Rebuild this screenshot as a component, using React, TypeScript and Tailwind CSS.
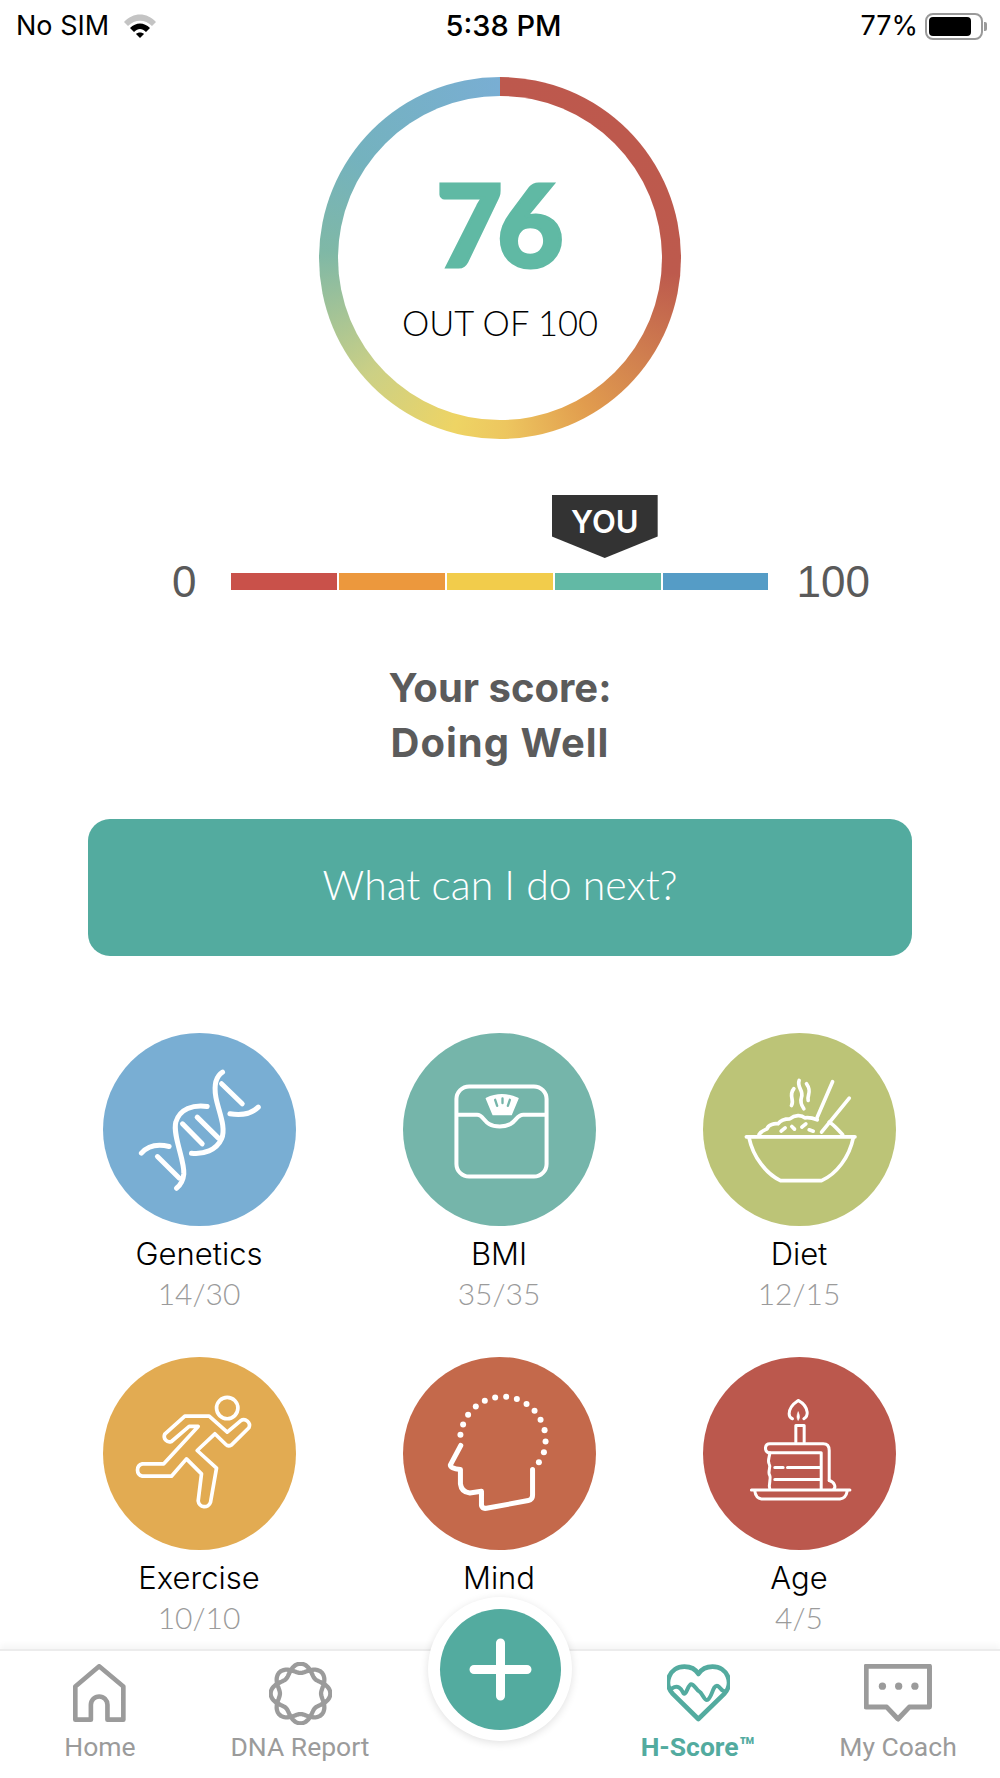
import React from 'react';

// closed wavy ring used by the DNA Report tab icon
const wavyRing = (sign: number) => {
  const points: string[] = [];
  for (let i = 0; i < 180; i++) {
    const t = (i / 180) * Math.PI * 2;
    const r = 76 + sign * 14 * Math.cos(4 * t);
    points.push(`${(900 + r * Math.sin(t)).toFixed(1)} ${(310 - r * Math.cos(t)).toFixed(1)}`);
  }
  return `M${points.join('L')}Z`;
};

const GeneticsIcon = () => (
  <svg viewBox="40 38 578 578" className="h-full w-full" fill="none" stroke="#fff" strokeWidth="15" strokeLinecap="round">
    <path d="M398 155C375 170 372 195 378 230C385 270 410 320 395 355C380 390 340 402 305 398" />
    <path d="M352 258C310 252 270 265 258 305C248 345 285 420 282 460C280 480 270 495 260 503" />
    <path d="M505 260C480 285 450 285 420 280M155 398C175 375 205 370 238 378" />
    <path d="M395 190L457 250M278 310L337 370M322 290L385 352M203 408L268 472" />
  </svg>
);

const BmiIcon = () => (
  <svg viewBox="40 38 578 578" className="h-full w-full" fill="none" stroke="#fff" strokeWidth="12" strokeLinecap="round">
    <rect x="200" y="198" width="270" height="270" rx="38" />
    <path d="M205 283H262C285 283 280 318 330 318C380 318 375 283 400 283H465" />
    <path d="M290 234C320 220 352 220 384 234L364 282H310Z" fill="#fff" strokeWidth="5" strokeLinejoin="round" />
    <path d="M316 238L322 256M338 234V248M360 238L354 256" stroke="#75b5aa" strokeWidth="7" />
  </svg>
);

const DietIcon = () => (
  <svg viewBox="40 38 578 578" className="h-full w-full" fill="none" stroke="#fff" strokeWidth="11" strokeLinecap="round" strokeLinejoin="round">
    <path d="M170 349H495" />
    <path d="M178 352C190 410 230 460 272 480H395C440 460 478 410 490 352" />
    <path d="M208 342C215 330 228 328 232 325C235 312 255 308 265 310C275 295 295 295 300 295C315 283 335 283 345 292C360 290 372 294 382 298M418 305C432 312 445 330 458 342" />
    <path d="M382 290L428 184M395 335L478 233" />
    <path d="M328 180C320 200 342 210 335 230C330 245 335 255 342 265M312 205C295 225 315 240 305 255M350 190C368 215 350 225 355 240" />
    <path d="M274 332L286 322M306 318L314 326M336 320L348 310M358 328L370 332" />
  </svg>
);

const ExerciseIcon = () => (
  <svg viewBox="40 35 578 578" className="h-full w-full" fill="none" stroke="#fff" strokeWidth="11" strokeLinejoin="round">
    <circle cx="412" cy="188" r="32" />
    <path d="M285 212H358L412 260L452 226A17 17 0 0 1 477 247L425 298Q415 304 408 297L375 265L322 315L380 368L362 470A19 19 0 0 1 325 466L335 385L290 340L245 392H158A19 19 0 0 1 158 355H222L325 243H298L245 288A16 16 0 0 1 225 266Z" />
  </svg>
);

const mindDots = [
  [212, 268], [220, 237], [235, 208], [258, 183], [285, 166], [316, 156], [349, 154], [381, 161],
  [410, 176], [434, 196], [452, 223], [464, 254], [467, 288], [462, 320], [447, 350],
];

const MindIcon = () => (
  <svg viewBox="40 35 578 578" className="h-full w-full" fill="none" stroke="#fff" strokeWidth="15" strokeLinecap="round" strokeLinejoin="round">
    <path d="M213 300L182 358Q180 368 212 372V415Q215 440 240 442L275 437V480Q278 490 290 488L415 465Q428 462 428 450V372" />
    {mindDots.map(([cx, cy]) => (
      <circle key={`${cx}-${cy}`} cx={cx} cy={cy} r="9" fill="#fff" stroke="none" />
    ))}
  </svg>
);

const AgeIcon = () => (
  <svg viewBox="40 35 578 578" className="h-full w-full" fill="none" stroke="#fff" strokeWidth="9" strokeLinecap="round" strokeLinejoin="round">
    <path d="M308 220C302 218 298 212 298 205C298 190 310 175 325 165C338 172 350 185 352 200C353 210 350 215 342 220" />
    <path d="M325 200Q318 215 325 225Q333 215 325 200Z" fill="#fff" strokeWidth="2" />
    <path d="M318 290V240H343V290" />
    <path d="M240 295H400Q418 295 418 315V405M240 295C225 295 222 315 236 322H394V430" />
    <path d="M240 322C240 335 232 345 238 355C245 365 232 378 240 390C245 400 235 415 240 430" />
    <path d="M255 366H280M293 366H392M255 402H392" />
    <path d="M418 405C435 410 438 425 432 430" />
    <path d="M185 433H480M195 436Q198 458 215 460H450Q468 458 472 436" />
  </svg>
);

const categories = [
  { name: 'Genetics', score: '14/30', color: 'bg-[#79aed3]', icon: <GeneticsIcon /> },
  { name: 'BMI', score: '35/35', color: 'bg-[#75b5aa]', icon: <BmiIcon /> },
  { name: 'Diet', score: '12/15', color: 'bg-[#bcc477]', icon: <DietIcon /> },
  { name: 'Exercise', score: '10/10', color: 'bg-[#e2ab52]', icon: <ExerciseIcon /> },
  { name: 'Mind', score: '', color: 'bg-[#c4694b]', icon: <MindIcon /> },
  { name: 'Age', score: '4/5', color: 'bg-[#bb584d]', icon: <AgeIcon /> },
];

const StatusBar = () => (
  <div className="flex h-[56px] items-center justify-between pb-[4px] pl-[16px] pr-[13px] font-['Inter',sans-serif] text-[27px] text-black">
    <div className="flex w-[300px] items-center gap-[15px]">
      <span>No SIM</span>
      <svg viewBox="0 0 32 24" className="h-[24px] w-[32px]">
        <path d="M0 8C9-2 23-2 32 8L28 12C21 5 11 5 4 12Z" fill="#c4c4c4" />
        <path d="M6 14C12 8 20 8 26 14L22 18C18 14 14 14 10 18Z" fill="#000" />
        <path d="M12 20C14 18 18 18 20 20L16 24Z" fill="#000" />
      </svg>
    </div>
    <span className="ml-[4px] text-[29px] font-medium">5:38 PM</span>
    <div className="flex w-[300px] items-center justify-end gap-[7px]">
      <span>77%</span>
      <div className="flex items-center gap-[1px]">
        <div className="h-[27px] w-[58px] rounded-[8px] border-2 border-[#9a9a9a] p-[2px]">
          <div className="h-full w-[42px] rounded-[4px] bg-black" />
        </div>
        <div className="h-[9px] w-[3px] rounded-r-[2px] bg-[#9a9a9a]" />
      </div>
    </div>
  </div>
);

const ScoreRing = () => (
  <div className="mx-auto mt-[21px] h-[362px] w-[362px] rounded-full bg-[conic-gradient(#bd584d_0deg,#bd5a4d_95deg,#d07f4f_125deg,#e19c4e_150deg,#edc65f_178deg,#eed464_195deg,#ccd085_228deg,#7fb8a6_272deg,#74b2be_305deg,#79aed3_360deg)] p-[19px]">
    <div className="flex h-full w-full flex-col items-center rounded-full bg-white">
      <div className="mr-[6px] mt-[67px] font-['Lato',sans-serif] text-[115px] font-black leading-[118px] tracking-[-0.05em] text-[#60b9a4] [-webkit-text-stroke:3px_#60b9a4]">76</div>
      <div className="mt-[20px] font-['Lato',sans-serif] text-[34.5px] font-light leading-[44px] text-black">OUT OF 100</div>
    </div>
  </div>
);

const ScaleBar = () => (
  <div className="ml-[172px] mt-[56px] flex w-[699px] items-end font-['Liberation_Sans',sans-serif] text-[44px] leading-[50px] text-[#5a5a5a]">
    <span className="-mb-[17px]">0</span>
    <div className="ml-[35px] mr-[28px] grid w-[537px] grid-cols-5 gap-x-[2px] gap-y-[15px]">
      <div className="col-start-4 -ml-[3px] mr-[3px] flex h-[63px] items-start justify-center bg-[#333333] pt-[9px] font-['Inter',sans-serif] text-[31px] font-semibold leading-[36px] text-white [clip-path:polygon(0_0,100%_0,100%_66%,50%_100%,0_66%)]">
        YOU
      </div>
      <div className="col-start-1 h-[17px] bg-[#c9514a]" />
      <div className="h-[17px] bg-[#ec983d]" />
      <div className="h-[17px] bg-[#f2cc4b]" />
      <div className="h-[17px] bg-[#62b9a5]" />
      <div className="h-[17px] bg-[#559cc6]" />
    </div>
    <span className="-mb-[17px]">100</span>
  </div>
);

const CategoryGrid = () => (
  <div className="mt-[77px] grid grid-cols-3 gap-y-[44px] pl-[49px] pr-[51px]">
    {categories.map((c) => (
      <div key={c.name} className="flex flex-col items-center">
        <div className={`h-[193px] w-[193px] rounded-full ${c.color}`}>{c.icon}</div>
        <div className="mt-[8px] font-['Inter',sans-serif] text-[31px] font-light leading-[39px] text-black">{c.name}</div>
        <div className="font-['Lato',sans-serif] text-[30px] font-light leading-[40px] text-[#9b9b9b]">{c.score}</div>
      </div>
    ))}
  </div>
);

const NavItem = ({ label, active, children }: { label: string; active?: boolean; children: React.ReactNode }) => (
  <div className="flex w-[200px] flex-col items-center">
    <div className="flex h-[62px] items-center justify-center">{children}</div>
    <span className={`mt-[7px] font-['Roboto',sans-serif] text-[26.5px] leading-[32px] ${active ? 'font-bold text-[#53ab9f]' : 'text-[#9b9b9b]'}`}>{label}</span>
  </div>
);

const BottomNav = () => (
  <div className="relative h-[129px] border-t-2 border-[#ececec] bg-white pt-[11px] shadow-[0_-4px_6px_rgba(0,0,0,0.04)]">
    <div className="flex">
      <NavItem label="Home">
        <svg viewBox="218 222 160 175" className="h-[58px] w-[53px] -translate-x-px" fill="none" stroke="#9b9b9b" strokeWidth="14" strokeLinejoin="round">
          <path d="M225 390V290L297 229L370 290V390H322V345A25 25 0 0 0 272 345V390Z" />
        </svg>
      </NavItem>
      <NavItem label="DNA Report">
        <svg viewBox="805 215 190 190" className="h-[63px] w-[63px]" fill="none" stroke="#9b9b9b" strokeWidth="13">
          <path d={wavyRing(1)} />
          <path d={wavyRing(-1)} />
        </svg>
      </NavItem>
      <div className="w-[198px]" />
      <NavItem label="H-Score™" active>
        <svg viewBox="503 222 189 175" className="h-[58px] w-[63px]" fill="none" stroke="#53ab9f" strokeWidth="14" strokeLinejoin="round" strokeLinecap="round">
          <path d="M597 388L520 312C490 280 510 230 555 230C575 230 590 240 597 252C605 240 620 230 640 230C685 230 705 280 675 312Z" />
          <path d="M518 295C535 285 545 295 552 310C560 320 565 285 575 283C585 283 590 300 600 305C610 310 615 335 625 330C640 320 640 285 655 288C665 292 665 305 680 305" strokeWidth="12" />
        </svg>
      </NavItem>
      <NavItem label="My Coach">
        <svg viewBox="1096 222 204 175" className="h-[58px] w-[68px]" fill="none" stroke="#9b9b9b" strokeWidth="15" strokeLinejoin="round">
          <path d="M1102 229H1293V352H1232L1198 388L1164 352H1102Z" />
          <circle cx="1151" cy="289" r="11" fill="#9b9b9b" stroke="none" />
          <circle cx="1200" cy="289" r="11" fill="#9b9b9b" stroke="none" />
          <circle cx="1249" cy="289" r="11" fill="#9b9b9b" stroke="none" />
        </svg>
      </NavItem>
    </div>
    {/* floating add button */}
    <div className="absolute left-[428px] top-[-54px] flex h-[144px] w-[144px] items-center justify-center rounded-full bg-white shadow-[0_2px_8px_rgba(0,0,0,0.12)]">
      <div className="flex h-[121px] w-[121px] items-center justify-center rounded-full bg-[#53ab9f]">
        <svg viewBox="0 0 63 63" className="h-[63px] w-[63px]" stroke="#fff" strokeWidth="9" strokeLinecap="round">
          <path d="M5 31.5H58M31.5 5V58" />
        </svg>
      </div>
    </div>
  </div>
);

const App: React.FC = () => {
  return (
    <div className="flex h-[1778px] w-[1000px] flex-col overflow-hidden bg-white">
      <StatusBar />
      <div className="flex-1">
        <ScoreRing />
        <ScaleBar />
        <div className="mt-[70px] text-center font-['Inter',sans-serif] text-[40px] font-bold leading-[55px] text-[#5b5b5b]">
          <div>Your score:</div>
          <div className="tracking-[1px]">Doing Well</div>
        </div>
        <div className="mx-[88px] mt-[49px] flex h-[137px] items-center justify-center rounded-[22px] bg-[#53ab9f] pb-[5px] font-['Lato',sans-serif] text-[41px] font-light text-white">
          What can I do next?
        </div>
        <CategoryGrid />
      </div>
      <BottomNav />
    </div>
  );
};

export default App;
